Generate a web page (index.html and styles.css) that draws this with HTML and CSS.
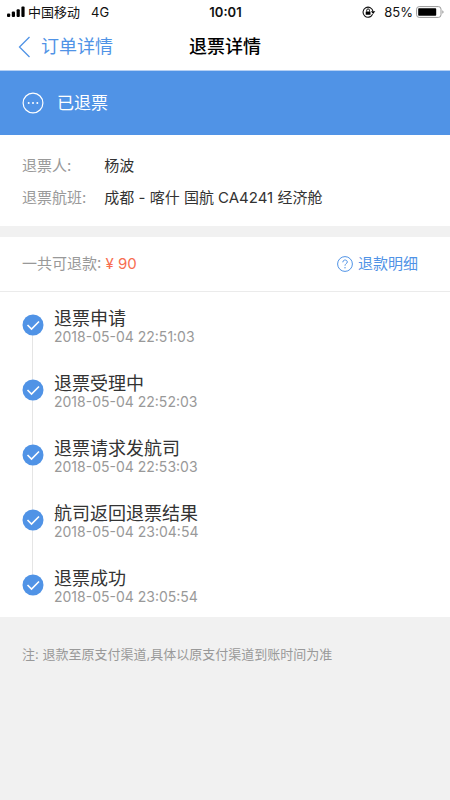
FILE: index.html
```html
<!DOCTYPE html>
<html lang="zh-CN">
<head>
<meta charset="utf-8">
<meta name="viewport" content="width=device-width, initial-scale=1">
<title>退票详情</title>
<link rel="stylesheet" href="styles.css">
</head>
<body>
<svg class="sprite" aria-hidden="true">
  <symbol id="check" viewBox="0 0 22 22">
    <circle cx="11" cy="11" r="10.5" fill="#5093e6"/>
    <path d="M5.5 11 9.5 15 17 7.5" fill="none" stroke="#fff" stroke-width="1.6"/>
  </symbol>
</svg>

<div class="status-bar">
  <div class="status-side">
    <svg class="signal" viewBox="0 0 18 12" aria-hidden="true">
      <rect x="0" y="7.5" width="3.2" height="3.5" rx="1"/>
      <rect x="4.8" y="5.5" width="3.2" height="5.5" rx="1"/>
      <rect x="9.6" y="3.3" width="3.2" height="7.7" rx="1"/>
      <rect x="14.4" y="0.5" width="3.2" height="10.5" rx="1"/>
    </svg>
    <span>中国移动</span>
    <span class="network">4G</span>
  </div>
  <span class="clock">10:01</span>
  <div class="status-side status-right">
    <svg class="lock" viewBox="0 0 14 12" aria-hidden="true">
      <path d="M10.6 8.3A5 5 0 1 1 11 5.4" fill="none" stroke="#111" stroke-width="1.1"/>
      <path d="M8.9 5.2h4.4l-2.2 2.9z"/>
      <rect x="3.7" y="5.4" width="4.8" height="3.4" rx=".4"/>
      <path d="M4.7 5.6V4.3a1.4 1.4 0 0 1 2.8 0v1.3" fill="none" stroke="#111"/>
    </svg>
    <span>85%</span>
    <svg class="battery" viewBox="0 0 28 12" aria-hidden="true">
      <rect x=".6" y=".6" width="24.4" height="10.8" rx="2.6" fill="#fff" stroke="#999"/>
      <rect x="2.2" y="2.2" width="18" height="7.6" rx=".8"/>
      <path d="M26.3 4.2q1.3.5 1.3 1.8t-1.3 1.8z" fill="#999"/>
    </svg>
  </div>
</div>

<header class="nav">
  <a class="back" href="#">
    <svg class="back-icon" viewBox="0 0 13 22" aria-hidden="true"><path d="M11.5 1 1.5 11l10 10" fill="none" stroke="currentColor" stroke-width="1.3"/></svg>
    <span>订单详情</span>
  </a>
  <h1 class="nav-title">退票详情</h1>
</header>

<main>
  <section class="banner">
    <svg class="banner-icon" viewBox="0 0 22 22" aria-hidden="true">
      <circle cx="11" cy="11" r="9.9" fill="none" stroke="#fff" stroke-width="1.2"/>
      <g fill="#fff"><circle cx="6.7" cy="11" r="1"/><circle cx="11" cy="11" r="1"/><circle cx="15.3" cy="11" r="1"/></g>
    </svg>
    <span>已退票</span>
  </section>

  <dl class="info">
    <dt>退票人:</dt><dd>杨波</dd>
    <dt>退票航班:</dt><dd>成都 - 喀什 国航 CA4241 经济舱</dd>
  </dl>

  <section class="refund">
    <div class="refund-head">
      <p class="total">一共可退款: <span class="amount">¥ 90</span></p>
      <a class="detail" href="#">
        <svg class="help" viewBox="0 0 16 16" aria-hidden="true">
          <circle cx="8" cy="8" r="7.4" fill="none" stroke="currentColor"/>
          <path d="M5.8 6.3c0-3 4.5-3 4.5-.3C10.3 7.6 8 7.7 8 9.7" fill="none" stroke="currentColor"/>
          <circle cx="8" cy="11.7" r=".7" fill="currentColor"/>
        </svg>
        <span>退款明细</span>
      </a>
    </div>
    <ol class="steps">
      <li class="step"><svg class="mark" aria-hidden="true"><use href="#check"/></svg><div class="step-text"><h2>退票申请</h2><time>2018-05-04 22:51:03</time></div></li>
      <li class="step"><svg class="mark" aria-hidden="true"><use href="#check"/></svg><div class="step-text"><h2>退票受理中</h2><time>2018-05-04 22:52:03</time></div></li>
      <li class="step"><svg class="mark" aria-hidden="true"><use href="#check"/></svg><div class="step-text"><h2>退票请求发航司</h2><time>2018-05-04 22:53:03</time></div></li>
      <li class="step"><svg class="mark" aria-hidden="true"><use href="#check"/></svg><div class="step-text"><h2>航司返回退票结果</h2><time>2018-05-04 23:04:54</time></div></li>
      <li class="step"><svg class="mark" aria-hidden="true"><use href="#check"/></svg><div class="step-text"><h2>退票成功</h2><time>2018-05-04 23:05:54</time></div></li>
    </ol>
  </section>
  <p class="note">注: 退款至原支付渠道,具体以原支付渠道到账时间为准</p>
</main>
</body>
</html>
```
FILE: styles.css
```css
* {
  box-sizing: border-box;
}

body, h1, h2, p, dl, dd, ol {
  margin: 0;
  padding: 0;
}

body {
  background: #f1f1f1;
  color: #333;
  font-family: Inter, "Noto Sans CJK SC", sans-serif;
  font-size: 15px;
  line-height: 20px;
}

a {
  color: #5093e6;
  text-decoration: none;
}

svg {
  display: block;
  flex: none;
}

.sprite {
  position: absolute;
  width: 0;
  height: 0;
}

.status-bar {
  display: grid;
  grid-template-columns: 1fr auto 1fr;
  align-items: center;
  height: 23px;
  padding: 0 6px 0 7px;
  background: #fff;
  color: #111;
  font-size: 13px;
}

.status-side {
  display: flex;
  align-items: center;
  gap: 3px;
}

.status-right {
  justify-content: flex-end;
}

.network {
  margin-left: 8px;
}

.clock {
  font-weight: 600;
}

.signal {
  width: 18px;
  height: 12px;
}

.lock {
  width: 14px;
  height: 12px;
  margin-right: 5px;
}

.battery {
  width: 28px;
  height: 12px;
}

.nav {
  display: grid;
  grid-template-columns: 1fr auto 1fr;
  align-items: center;
  height: 48px;
  padding: 0 18px;
  background: #fff;
  border-bottom: 1px solid #b5d0f4;
  font-size: 18px;
}

.back {
  display: flex;
  align-items: center;
  gap: 10px;
}

.back-icon {
  width: 13px;
  height: 22px;
}

.nav-title {
  color: #000;
  font-size: 18px;
  font-weight: 500;
}

.banner {
  display: flex;
  align-items: center;
  gap: 13px;
  height: 64px;
  padding: 0 22px;
  background: #5093e6;
  color: #fff;
  font-size: 17px;
}

.banner-icon {
  width: 22px;
  height: 22px;
}

.info {
  display: grid;
  grid-template-columns: auto 1fr;
  gap: 12px 18px;
  padding: 21px 22px 18px;
  background: #fff;
}

.info dt, .total {
  color: #999;
}

.refund {
  margin-top: 11px;
  background: #fff;
}

.refund-head {
  display: flex;
  align-items: center;
  justify-content: space-between;
  height: 55px;
  padding: 0 32px 0 22px;
  border-bottom: 1px solid #ebebeb;
}

.amount {
  color: #f76d50;
}

.detail {
  display: flex;
  align-items: center;
  gap: 5px;
}

.help {
  width: 16px;
  height: 16px;
}

.steps {
  list-style: none;
}

.step {
  position: relative;
  display: flex;
  align-items: center;
  gap: 10px;
  height: 65px;
  padding: 0 22px;
}

.step::before {
  content: "";
  position: absolute;
  top: 0;
  bottom: 0;
  left: 32px;
  width: 1px;
  background: #e5e5e5;
}

.step:first-child::before {
  top: 50%;
}

.step:last-child::before {
  bottom: 50%;
}

.mark {
  position: relative;
  width: 22px;
  height: 22px;
}

.step-text {
  padding-top: 5px;
}

.step h2 {
  font-size: 18px;
  font-weight: 400;
  line-height: 20px;
}

.step time {
  display: block;
  color: #999;
  font-size: 14px;
  line-height: 16px;
}

.note {
  padding: 27px 22px;
  color: #999;
  font-size: 13px;
}
```
